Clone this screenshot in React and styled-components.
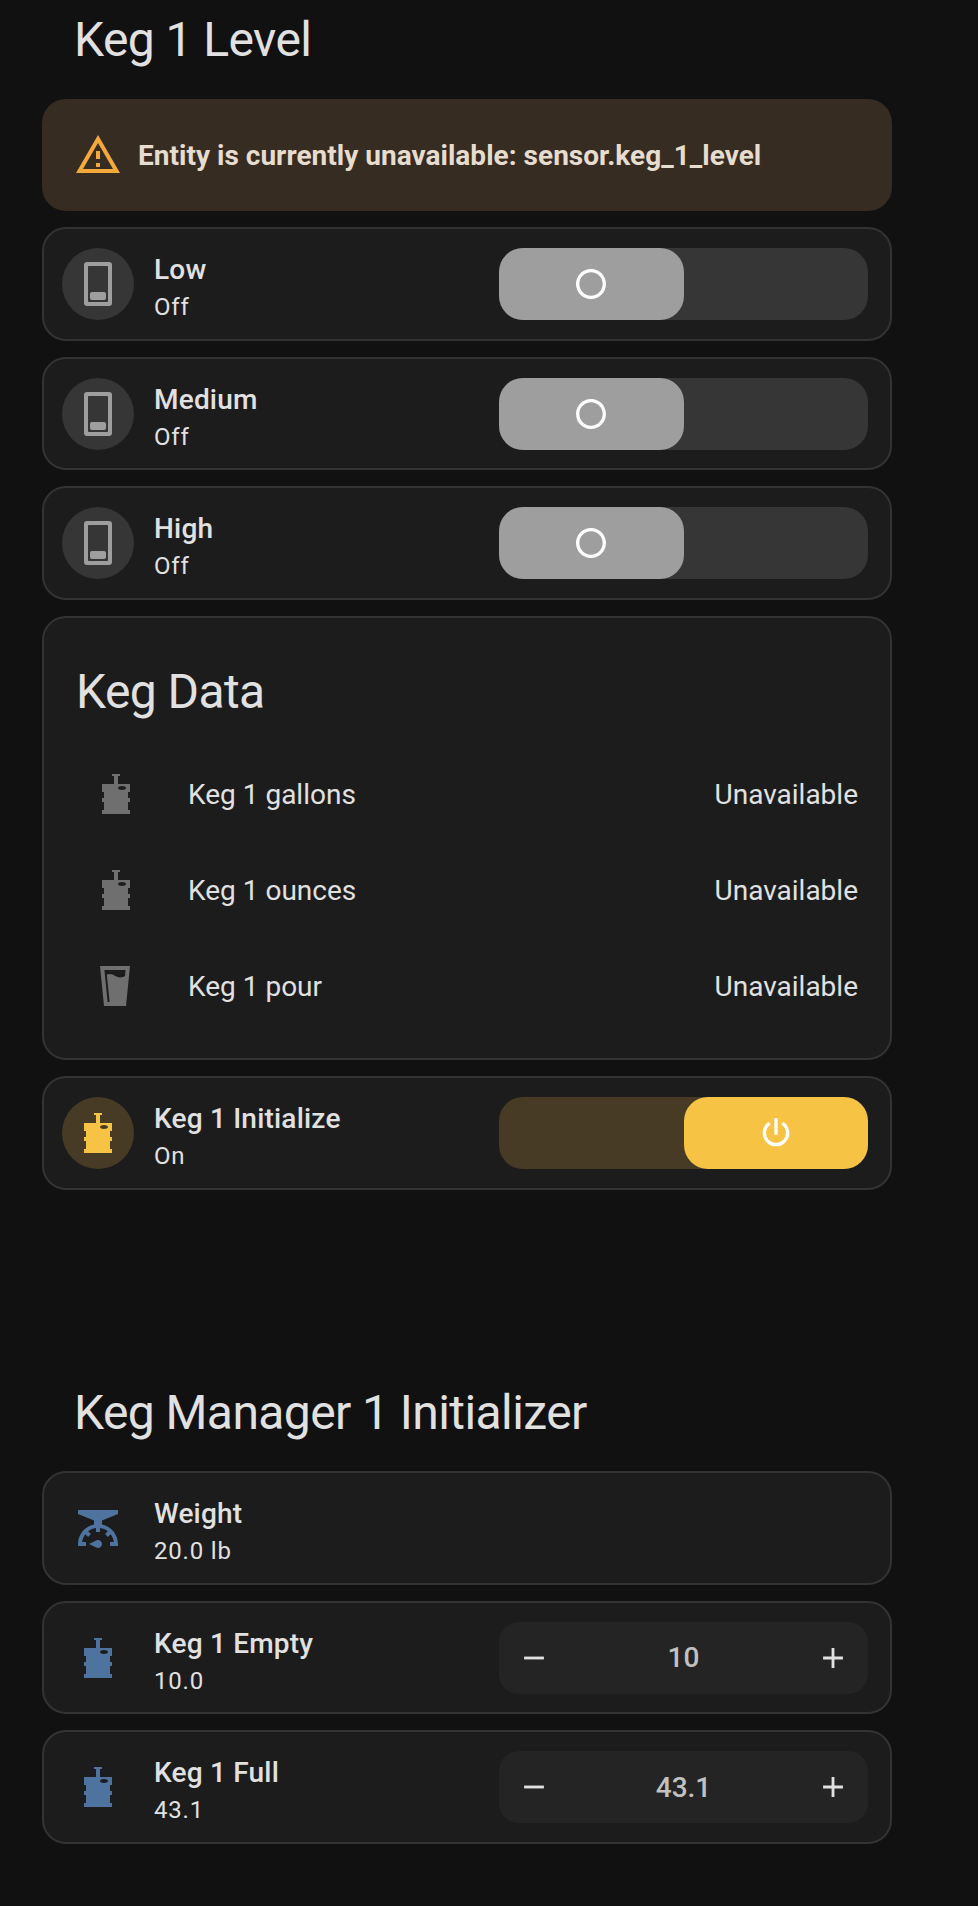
import styled, { createGlobalStyle } from "styled-components";

const GlobalStyle = createGlobalStyle`
    body {
        margin: 0;
        background: #111111;
        color: #e1e1e1;
        font-family: Roboto, sans-serif;
        font-size: 28px;
    }
`;

const Page = styled.main`
    box-sizing: border-box;
    width: 892px;
    min-height: 1906px;
    padding-left: 42px;
`;

const Section = styled.section`
    display: flex;
    flex-direction: column;
    gap: 16px;
    padding-top: ${props => props.$top}px;
`;

const Heading = styled.h1`
    margin: 0;
    padding: 0 32px;
    height: ${props => props.$height}px;
    font-size: 48px;
    font-weight: 400;
    line-height: 80px;
    letter-spacing: -0.576px;
`;

const Alert = styled.div`
    display: flex;
    align-items: center;
    gap: 16px;
    box-sizing: border-box;
    height: 112px;
    padding: 0 32px;
    border-radius: 24px;
    background: #362c21;
    color: #e6dccf;
    font-weight: 700;
    letter-spacing: 0.02px;

    svg {
        color: #f5a93b;
    }
`;

const Card = styled.div`
    box-sizing: border-box;
    border: 2px solid #333333;
    border-radius: 24px;
    background: #1c1c1c;
`;

const TileCard = styled(Card)`
    display: flex;
    align-items: flex-start;
    height: 113.6px;
    padding: 19px 22px 0 18px;
`;

const Shape = styled.div`
    display: flex;
    align-items: center;
    justify-content: center;
    width: 72px;
    height: 72px;
    margin-right: 20px;
    border-radius: 50%;
    background: ${props => props.$bg || "transparent"};
    color: ${props => props.$color};
`;

const Info = styled.div`
    flex: 1;
    padding-top: 2px;
`;

const Name = styled.div`
    font-weight: 500;
    line-height: 40px;
    letter-spacing: 0.2px;
`;

const State = styled.div`
    margin-top: 1px;
    font-size: 24px;
    line-height: 32px;
    letter-spacing: 0.8px;
`;

const Track = styled.div`
    display: flex;
    justify-content: ${props => props.$on ? "flex-end" : "flex-start"};
    width: 369px;
    height: 72px;
    border-radius: 24px;
    background: ${props => props.$on ? "#483b25" : "#363636"};
`;

const Thumb = styled.div`
    display: flex;
    align-items: center;
    justify-content: center;
    width: 184.5px;
    border-radius: 24px;
    background: ${props => props.$on ? "#f6c344" : "#9e9e9e"};
    color: white;
`;

const Stepper = styled.div`
    display: flex;
    align-items: center;
    justify-content: space-between;
    box-sizing: border-box;
    width: 369px;
    height: 72px;
    padding: 0 18px;
    border-radius: 20px;
    background: #242424;
`;

const Value = styled.span`
    color: #c1c1c1;
    font-weight: 500;
`;

const EntitiesCard = styled(Card)`
    height: 444.4px;
    padding: 26px 32px 0;
`;

const CardTitle = styled.h2`
    margin: 0 0 14.2px;
    font-size: 48px;
    font-weight: 400;
    line-height: 96px;
    letter-spacing: -0.576px;
`;

const EntityRow = styled.div`
    display: flex;
    align-items: center;
    height: 80px;
    margin-bottom: 16px;
`;

const RowIcon = styled.div`
    display: flex;
    justify-content: center;
    width: 80px;
    margin-right: 32px;
    color: #6f6f6f;
`;

const RowText = styled.div`
    flex: ${props => props.$grow ? 1 : "none"};
    padding-top: 1px;
`;

const paths = {
    alert: "M12,2L1,21H23M12,6L19.53,19H4.47M11,10V14H13V10M11,16V18H13V16",
    keg: "M5,22V20H6V16H5V14H6V11H5V7H11V3H10V2H14V3H13V7H19V11H18V14H19V16H18V20H19V22H5M17,9C17,8.45 16.1,8 15,8C13.9,8 13,8.45 13,9C13,9.55 13.9,10 15,10C16.1,10 17,9.55 17,9Z",
    sensor: "M6.5,1A1.5,1.5 0 0,0 5,2.5V21.5A1.5,1.5 0 0,0 6.5,23H17.5A1.5,1.5 0 0,0 19,21.5V2.5A1.5,1.5 0 0,0 17.5,1H6.5M7.4,3H16.6A0.4,0.4 0 0,1 17,3.4V20.6A0.4,0.4 0 0,1 16.6,21H7.4A0.4,0.4 0 0,1 7,20.6V3.4A0.4,0.4 0 0,1 7.4,3M9,16A1,1 0 0,0 8,17V19A1,1 0 0,0 9,20H15A1,1 0 0,0 16,19V17A1,1 0 0,0 15,16H9Z",
    beer: "M4,2L6,22H17L19,2H4M6.2,4H16.8L16.5,7C16.1,7.3 15.4,7.7 14,7.7C11.9,7.7 10.8,6 8.8,6C8.2,6 7.8,6.1 7.4,6.3L8.8,20H7.8L6.2,4Z",
    scale: "M8.46,15.06L7.05,16.47L5.68,15.1C4.82,16.21 4.24,17.54 4.06,19H6V21H2V20C2,15.16 5.44,11.13 10,10.2V8.2L2,5V3H22V5L14,8.2V10.2C18.56,11.13 22,15.16 22,20V21H18V19H19.94C19.76,17.54 19.18,16.21 18.32,15.1L16.95,16.47L15.54,15.06L16.91,13.68C15.8,12.82 14.46,12.24 13,12.06V14H11V12.06C9.54,12.24 8.2,12.82 7.09,13.68L8.46,15.06M12,18C13.11,18 14,18.9 14,20C14,21.11 13.11,22 12,22C11.66,22 11.35,21.92 11.07,21.77L7.5,20L11.07,18.22C11.35,18.08 11.66,18 12,18Z",
    powerOff: "M12,3C7,3 3,7 3,12C3,17 7,21 12,21C17,21 21,17 21,12C21,7 17,3 12,3M12,19C8.1,19 5,15.9 5,12C5,8.1 8.1,5 12,5C15.9,5 19,8.1 19,12C19,15.9 15.9,19 12,19Z",
    power: "M16.56,5.44L15.11,6.89C16.84,7.94 18,9.83 18,12A6,6 0 0,1 12,18A6,6 0 0,1 6,12C6,9.83 7.16,7.94 8.88,6.88L7.44,5.44C5.36,6.88 4,9.28 4,12A8,8 0 0,0 12,20A8,8 0 0,0 20,12C20,9.28 18.64,6.88 16.56,5.44M13,3H11V13H13",
    minus: "M19,13H5V11H19V13Z",
    plus: "M19,13H13V19H11V13H5V11H11V5H13V11H19V13Z",
};

function Icon({ name, size = 48 }) {
    return (
        <svg width={size} height={size} viewBox="0 0 24 24">
            <path d={paths[name]} fill="currentColor" fillRule="evenodd" />
        </svg>
    );
}

function Tile({ icon, name, state, color, bg, children }) {
    return (
        <TileCard>
            <Shape $color={color} $bg={bg}><Icon name={icon} /></Shape>
            <Info>
                <Name>{name}</Name>
                <State>{state}</State>
            </Info>
            {children}
        </TileCard>
    );
}

function Toggle({ on }) {
    return (
        <Track $on={on}>
            <Thumb $on={on}><Icon name={on ? "power" : "powerOff"} size={40} /></Thumb>
        </Track>
    );
}

function NumberBox({ value }) {
    return (
        <Stepper>
            <Icon name="minus" size={34} />
            <Value>{value}</Value>
            <Icon name="plus" size={34} />
        </Stepper>
    );
}

const levels = ["Low", "Medium", "High"];

const entities = [
    { name: "Keg 1 gallons", icon: "keg" },
    { name: "Keg 1 ounces", icon: "keg" },
    { name: "Keg 1 pour", icon: "beer" },
];

export default function App() {
    return (
        <Page>
            <GlobalStyle />
            <Section $top={0}>
                <Heading $height={83}>Keg 1 Level</Heading>
                <Alert>
                    <Icon name="alert" />
                    <span>Entity is currently unavailable: sensor.keg_1_level</span>
                </Alert>
                {levels.map(level => (
                    <Tile key={level} icon="sensor" name={level} state="Off" color="#9e9e9e" bg="#363636">
                        <Toggle />
                    </Tile>
                ))}
                <EntitiesCard>
                    <CardTitle>Keg Data</CardTitle>
                    {entities.map(entity => (
                        <EntityRow key={entity.name}>
                            <RowIcon><Icon name={entity.icon} /></RowIcon>
                            <RowText $grow>{entity.name}</RowText>
                            <RowText>Unavailable</RowText>
                        </EntityRow>
                    ))}
                </EntitiesCard>
                <Tile icon="keg" name="Keg 1 Initialize" state="On" color="#f6c344" bg="#483b25">
                    <Toggle on />
                </Tile>
            </Section>
            <Section $top={183.2}>
                <Heading $height={82}>Keg Manager 1 Initializer</Heading>
                <Tile icon="scale" name="Weight" state="20.0 lb" color="#4d739e" />
                <Tile icon="keg" name="Keg 1 Empty" state="10.0" color="#4d739e">
                    <NumberBox value="10" />
                </Tile>
                <Tile icon="keg" name="Keg 1 Full" state="43.1" color="#4d739e">
                    <NumberBox value="43.1" />
                </Tile>
            </Section>
        </Page>
    );
}
